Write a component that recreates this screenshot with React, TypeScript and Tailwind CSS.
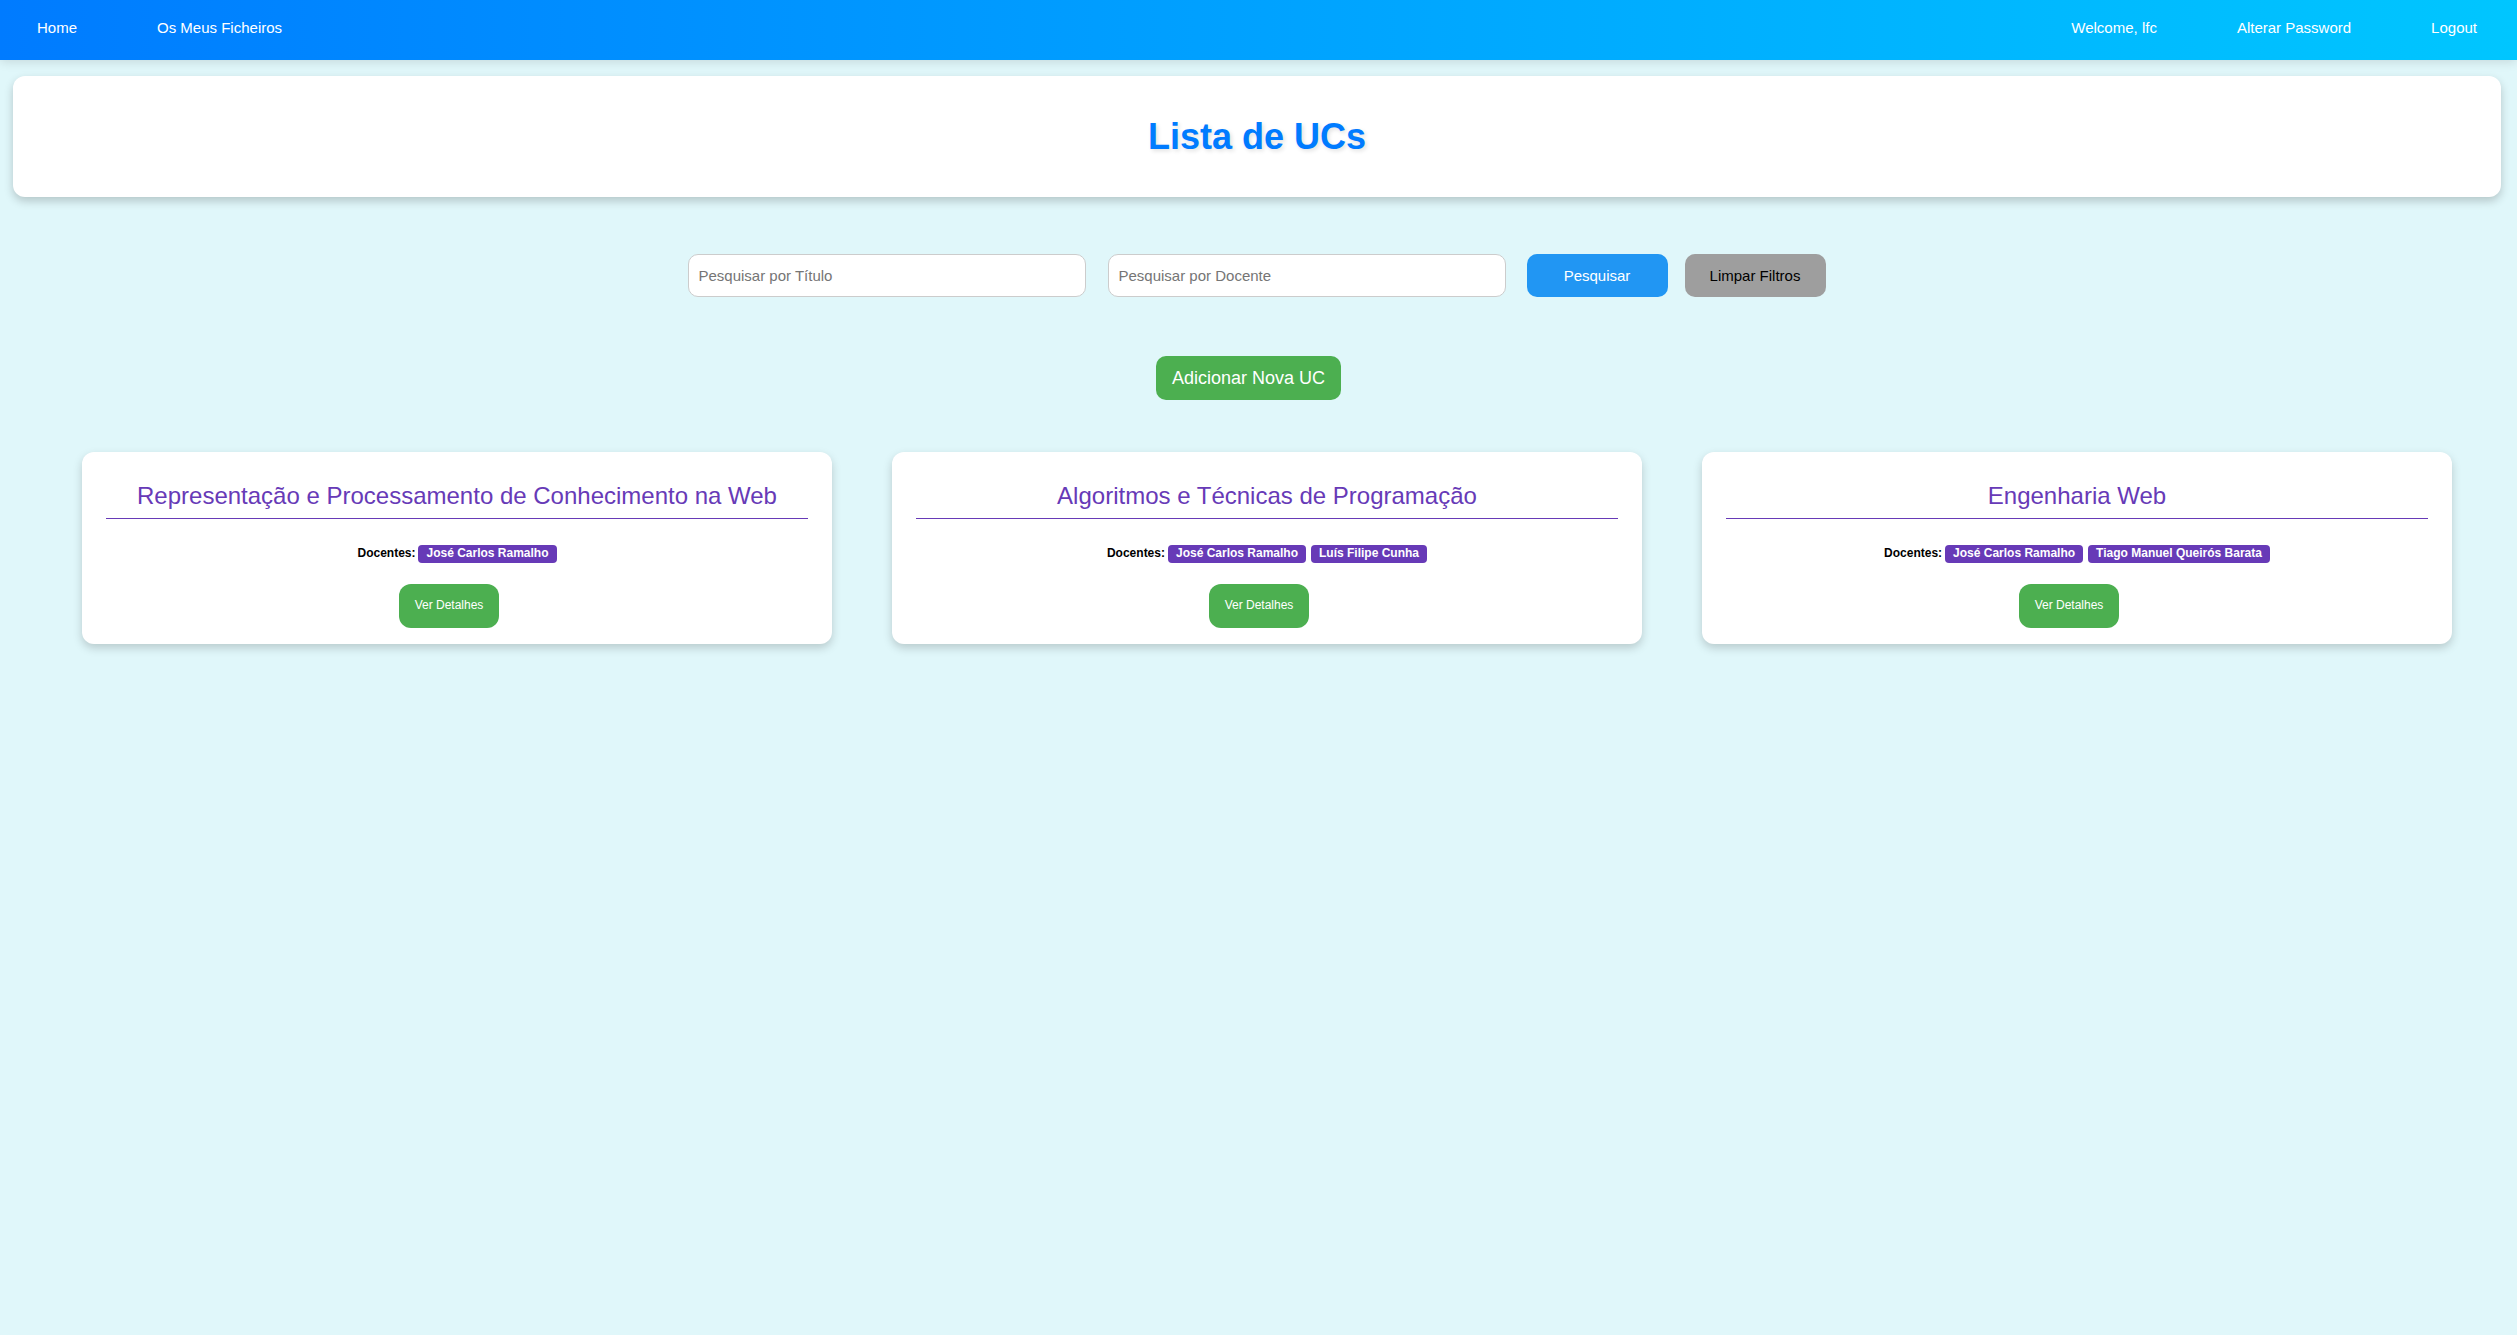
const ucs = [
  {
    id: 'rpcw',
    titulo: 'Representação e Processamento de Conhecimento na Web',
    docentes: ['José Carlos Ramalho'],
  },
  {
    id: 'atp',
    titulo: 'Algoritmos e Técnicas de Programação',
    docentes: ['José Carlos Ramalho', 'Luís Filipe Cunha'],
  },
  {
    id: 'ew',
    titulo: 'Engenharia Web',
    docentes: ['José Carlos Ramalho', 'Tiago Manuel Queirós Barata'],
  },
];

function NavBar() {
  return (
    <nav className="flex h-[60px] items-start justify-between bg-gradient-to-r from-[#007bff] to-[#00c6ff] pl-[37px] pr-[40px] pt-[19px] text-[15px] text-white shadow-[0_2px_10px_rgba(0,0,0,0.12)]">
      <div className="flex gap-[80px]">
        <a href="#">Home</a>
        <a href="#">Os Meus Ficheiros</a>
      </div>
      <div className="flex gap-[80px]">
        <span>Welcome, lfc</span>
        <a href="#">Alterar Password</a>
        <a href="#">Logout</a>
      </div>
    </nav>
  );
}

function UcCard({ titulo, docentes }: { titulo: string; docentes: string[] }) {
  return (
    <div className="rounded-[12px] bg-white px-6 pb-4 pt-[30px] shadow-[0_4px_10px_rgba(0,0,0,0.18)]">
      <h2 className="border-b border-[#673ab7] pb-[8px] text-center text-[24px] leading-[28px] text-[#673ab7]">
        {titulo}
      </h2>
      <div className="mt-[26px] flex items-center justify-center gap-[5px] text-[12px] font-bold">
        <span className="mr-[-2px] text-black">Docentes:</span>
        {docentes.map((d) => (
          <span key={d} className="rounded-[4px] bg-[#673ab7] px-2 py-[2px] text-white">
            {d}
          </span>
        ))}
      </div>
      <div className="mt-[21px] flex justify-center">
        <button className="mr-[16px] h-[44px] rounded-[12px] bg-[#4caf50] px-4 text-[12px] text-white">
          Ver Detalhes
        </button>
      </div>
    </div>
  );
}

export default function App() {
  return (
    <div className="min-h-[1335px] bg-[#e0f7fa] font-['Liberation_Sans',Arial,sans-serif] leading-[1.15]">
      <NavBar />

      {/* Header */}
      <div className="ml-[13px] mr-[16px] mt-[16px] flex h-[121px] items-center justify-center rounded-[12px] bg-white shadow-[0_4px_10px_rgba(0,0,0,0.2)]">
        <h1 className="text-[36px] font-bold text-[#007bff] [text-shadow:2px_2px_4px_rgba(0,0,0,0.12)]">
          Lista de UCs
        </h1>
      </div>

      {/* Filtros */}
      <div className="mt-[57px] flex justify-center">
        <input
          placeholder="Pesquisar por Título"
          className="h-[43px] w-[398px] rounded-[10px] border border-[#cccccc] bg-white px-[10px] text-[15px] outline-none placeholder:text-[#757575]"
        />
        <input
          placeholder="Pesquisar por Docente"
          className="ml-[22px] h-[43px] w-[398px] rounded-[10px] border border-[#cccccc] bg-white px-[10px] text-[15px] outline-none placeholder:text-[#757575]"
        />
        <button className="ml-[21px] h-[43px] w-[141px] rounded-[10px] bg-[#2196f3] text-[15px] text-white">
          Pesquisar
        </button>
        <button className="ml-[17px] mr-[4px] h-[43px] w-[141px] rounded-[10px] bg-[#9e9e9e] text-[15px] text-black">
          Limpar Filtros
        </button>
      </div>

      <div className="mt-[59px] flex justify-center">
        <button className="mr-[20px] h-[44px] rounded-[10px] bg-[#4caf50] px-4 text-[18px] text-white">
          Adicionar Nova UC
        </button>
      </div>

      {/* Lista */}
      <div className="mt-[52px] grid grid-cols-3 gap-[60px] pl-[82px] pr-[65px]">
        {ucs.map((uc) => (
          <UcCard key={uc.id} titulo={uc.titulo} docentes={uc.docentes} />
        ))}
      </div>
    </div>
  );
}
